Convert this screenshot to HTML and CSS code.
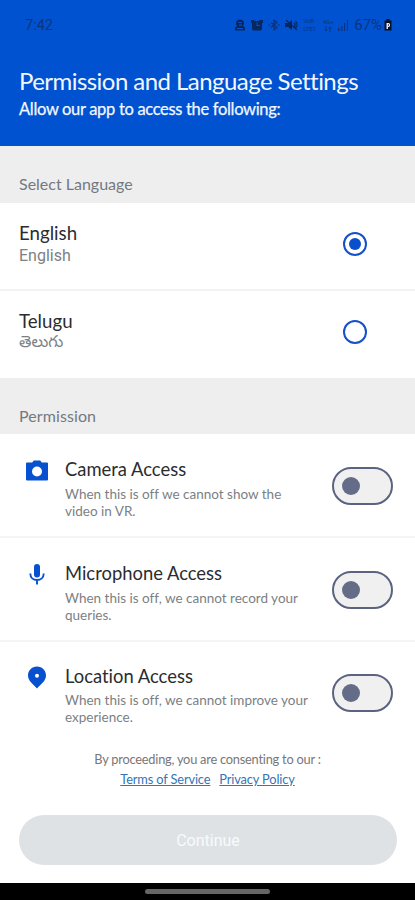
FILE: index.html
```html
<!DOCTYPE html>
<html lang="en">
<head>
<meta charset="utf-8">
<title>Permission and Language Settings</title>
<link rel="stylesheet" href="styles.css">
</head>
<body>
<div class="screen">
  <header class="header">
    <div class="status">
      <span class="time">7:42</span>
      <div class="status-icons">
        <svg width="12" height="12" viewBox="0 0 12 12"><path fill="currentColor" fill-rule="evenodd" d="M6 .5C3.500.5 2 2 2 4.300c0 1.200.5 2 1 2.700L1 8.500v3h10v-3L9 7c.5-.7 1-1.500 1-2.700C10 2 8.500.5 6 .5zM4.200 3h3.600v1H4.200zM5 5.500h3v1.200H5zM3 9h6v1H3z"/></svg>
        <svg width="12" height="12" viewBox="0 0 12 12"><path fill="currentColor" fill-rule="evenodd" d="M0 1h3.500v1h5V1H12v3h-1v6l-1 1.500H2L1 10V4H0zM5.500 3.500V7H9V6H6.500V3.500z"/></svg>
        <svg class="dim" width="12" height="12" viewBox="0 0 12 12"><path fill="none" stroke="currentColor" stroke-width="1.400" d="M3 3.500l6 5L6 11V1l3 2.500-6 5M.5 6h1.500M10 6h1.500"/></svg>
        <svg width="13" height="12" viewBox="0 0 13 12"><path fill="currentColor" d="M0 4h3l4-3v10L3 8H0z"/><path stroke="currentColor" stroke-width="1.200" fill="none" d="M1 1l11 10M9 4c1.500 1 1.500 3 0 4M10.500 2c2 2 2 5 0 7"/></svg>
        <span class="net"><span>VoB</span><span>LTE1</span></span>
        <span class="net net-up"><span>4G+</span><svg width="8" height="6" viewBox="0 0 8 6"><path fill="none" stroke="currentColor" stroke-width=".9" d="M2 0v5M.5 3.500 2 5l1.500-1.500M6 6V1M4.500 2.500 6 1l1.500 1.500"/></svg></span>
        <svg class="signal" width="11" height="11" viewBox="0 0 11 11"><path fill="currentColor" d="M0 8h1.500v3H0zM3 6h1.500v5H3zM6 3h1.200v8H6zM9 0h1v11H9z"/></svg>
        <span class="percent">67%</span>
        <svg class="battery" width="8" height="12" viewBox="0 0 8 12"><path fill="#071225" d="M2.500 0h3v1.500H7.500v10H.5v-10h2z"/><path fill="#dce8ff" fill-rule="evenodd" d="M2.500 4H5l1 1v2L5 8H4v2H2.500zM4 5.200v1.500h.8V5.200z"/></svg>
      </div>
    </div>
    <h1 class="title">Permission and Language Settings</h1>
    <p class="subtitle">Allow our app to access the following:</p>
  </header>

  <h2 class="section section-language">Select Language</h2>
  <div class="language">
    <div><div class="name">English</div><div class="native">English</div></div>
    <span class="radio selected"></span>
  </div>
  <div class="language">
    <div><div class="name">Telugu</div><div class="native telugu" lang="te">తెలుగు</div></div>
    <span class="radio"></span>
  </div>

  <h2 class="section section-permission">Permission</h2>
  <div class="permission">
    <svg class="icon" width="24" height="24" viewBox="0 0 24 24"><path fill="currentColor" fill-rule="evenodd" d="M8.800 1.500 7.200 3.500H2Q1 3.500 1 4.500v16Q1 21.500 2 21.500h20q1 0 1-1v-16q0-1-1-1h-5.200l-1.600-2zM12 7.500a5 5 0 1 1 0 10 5 5 0 0 1 0-10z"/></svg>
    <div class="copy"><div class="name">Camera Access</div><p>When this is off we cannot show the<br>video in VR.</p></div>
    <span class="toggle"></span>
  </div>
  <div class="permission">
    <svg class="icon" width="24" height="24" viewBox="0 0 24 24"><rect x="9" y="1" width="6" height="13.500" rx="3" fill="currentColor"/><path fill="none" stroke="currentColor" stroke-width="1.900" d="M5.300 10.500c0 4 3 6.500 6.700 6.500s6.700-2.500 6.700-6.500M12 17v4.500"/></svg>
    <div class="copy"><div class="name">Microphone Access</div><p>When this is off, we cannot record your<br>queries.</p></div>
    <span class="toggle"></span>
  </div>
  <div class="permission last">
    <svg class="icon" width="24" height="24" viewBox="0 0 24 24"><path fill="currentColor" fill-rule="evenodd" d="M12 .5c-5.200 0-9 4-9 9 0 5.500 5.500 9 9 13 3.500-4 9-7.500 9-13 0-5-3.800-9-9-9zM12 7.700a2 2 0 1 1 0 4 2 2 0 0 1 0-4z"/></svg>
    <div class="copy"><div class="name">Location Access</div><p>When this is off, we cannot improve your<br>experience.</p></div>
    <span class="toggle"></span>
  </div>

  <div class="consent">
    <p>By proceeding, you are consenting to our :</p>
    <div class="links"><a href="#">Terms of Service</a><a href="#">Privacy Policy</a></div>
  </div>
  <button class="continue" disabled>Continue</button>
  <div class="navbar"><span></span></div>
</div>
</body>
</html>
```
FILE: styles.css
```css
* { box-sizing: border-box; margin: 0; padding: 0; }
body { font-family: Lato, sans-serif; font-variant-ligatures: none; background: #fff; color: #2b2c30; }
.screen { width: 415px; height: 900px; display: flex; flex-direction: column; overflow: hidden; }
.screen > * { flex-shrink: 0; }

.header { height: 146px; background: #0052d1; color: #f2f7ff; padding: 16px 19px 0; }
.status { display: flex; justify-content: space-between; height: 18px; padding: 0 4px 0 6px; color: #06275f; font-family: Roboto, sans-serif; }
.time { font-size: 14.500px; line-height: 20px; color: #0a3580; }
.status-icons { display: flex; align-items: center; gap: 5px; }
.status-icons svg { display: block; }
.status-icons .dim, .net, .signal, .percent { color: #0a3580; }
.net { display: flex; flex-direction: column; font-size: 6px; line-height: 8px; width: 15px; margin-right: -1px; }
.net-up { align-items: center; width: 12px; }
.percent { font-size: 15px; }
.battery { margin-left: -3px; }
.title { font-size: 24px; letter-spacing: -.55px; line-height: 30px; font-weight: 400; margin-top: 32px; white-space: nowrap; }
.subtitle { font-size: 16.500px; letter-spacing: -.32px; line-height: 24px; margin-top: 1px; white-space: nowrap; -webkit-text-stroke: .25px #f2f7ff; }

.section { height: 57px; background: #eee; color: #737983; font-size: 16px; font-weight: 400; line-height: 20px; padding: 28px 19px 0; }
.section-permission { height: 56px; letter-spacing: .1px; }
.name { font-size: 18.400px; line-height: 22px; white-space: nowrap; }
.language { height: 88px; padding: 19px 48px 0 19px; display: flex; justify-content: space-between; border-bottom: 2px solid #f3f3f3; }
.language + .language { height: 87px; border-bottom: 0; }
.language .name { font-size: 18.700px; }
.native { font: 16px/22px Roboto, sans-serif; color: #7c7f84; padding-top: 1px; }
.telugu { font-family: "Noto Sans Telugu", "Noto Sans", sans-serif; }
.radio { width: 24px; height: 24px; border: 2px solid #1550c8; border-radius: 50%; margin-top: 10px; padding: 4px; }
.radio.selected::before { content: ""; display: block; width: 12px; height: 12px; border-radius: 50%; background: #0c4fce; }

.permission { height: 104px; padding: 24px 22px 0 25px; display: flex; border-bottom: 2px solid #f5f5f5; }
.permission.last { height: 98px; padding-top: 23px; border: 0; }
.icon { color: #0750d0; margin-top: 1px; }
.copy { flex: 1; margin-left: 16px; }
.copy p { font-size: 13.500px; line-height: 17px; color: #7b7f84; margin-top: 6px; white-space: nowrap; }
.permission.last p { margin-top: 5px; }
.toggle { width: 61px; height: 38px; margin-top: 9px; border: 2px solid #5b6380; border-radius: 19px; background: #f0f0f0; padding: 8px; }
.toggle::before { content: ""; display: block; width: 18px; height: 18px; border-radius: 50%; background: #646c88; }

.consent { text-align: center; height: 75px; padding-top: 9px; font-size: 12.800px; letter-spacing: -.22px; color: #777; }
.consent p { line-height: 20px; }
.links { display: flex; justify-content: center; gap: 9px; line-height: 20px; letter-spacing: -.13px; }
.links a { color: #3574b5; }
.continue { width: 378px; height: 50px; margin-left: 19px; border: 0; border-radius: 25px; background: #dee2e5; color: #f9fafb; font: 16px Roboto, sans-serif; }
.navbar { margin-top: auto; height: 17px; background: #000; display: flex; justify-content: center; padding-top: 6px; }
.navbar span { width: 125px; height: 5px; border-radius: 3px; background: #666; }
```
